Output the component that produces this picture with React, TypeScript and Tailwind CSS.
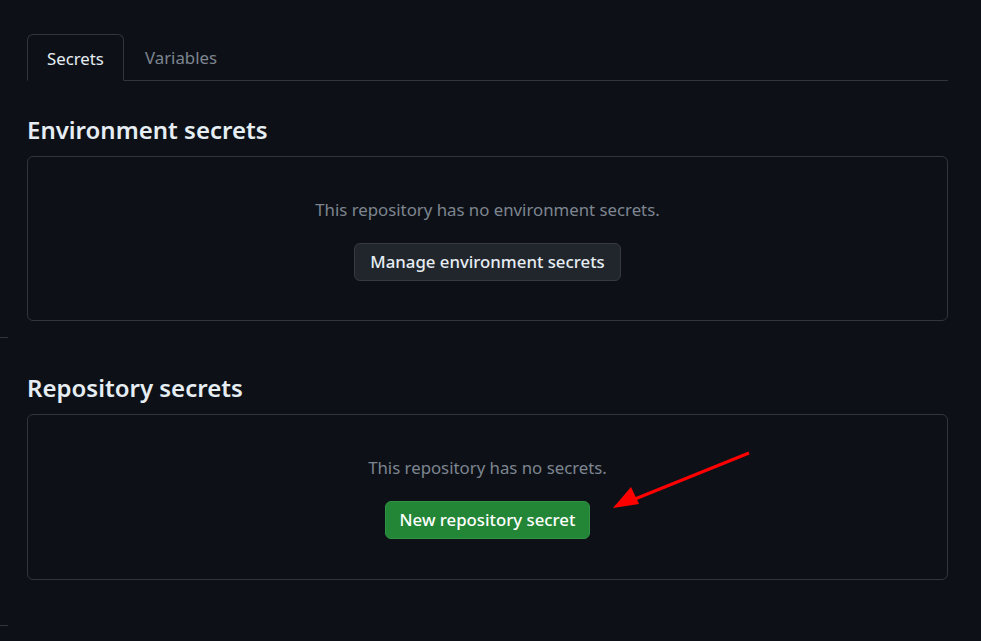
import React from "react";

export default function App() {
  const font = { fontFamily: '"Noto Sans", "Open Sans", sans-serif' };
  return (
    <div
      className="relative w-[981px] h-[641px] overflow-hidden bg-[#0d1117] pl-[27px] pr-[33px] pt-[34px]"
      style={font}
    >
      <div className="absolute left-0 top-[337px] w-[8px] h-px bg-[#30363d]" />
      <div className="absolute left-0 top-[625px] w-[8px] h-px bg-[#30363d]" />

      {/* Tabs */}
      <div className="flex border-b border-[#30363d] h-[47px]">
        <div className="w-[97px] h-[47px] -mb-px border border-[#30363d] border-b-[#0d1117] rounded-t-[6px] bg-[#0d1117] flex items-center pl-[19px] pt-[2px] text-[16.8px] text-[#e6edf3]">
          Secrets
        </div>
        <div className="flex items-center pl-[21px] pt-[2px] text-[16.8px] text-[#7d8590]">Variables</div>
      </div>

      <h2 className="mt-[31px] text-[24px] leading-[36px] font-semibold text-[#e6edf3]">
        Environment secrets
      </h2>
      <div className="mt-[8px] h-[165px] border border-[#30363d] rounded-[6px] flex flex-col items-center pt-[41px]">
        <p className="text-[16.8px] leading-[24px] text-[#7d8590]">
          This repository has no environment secrets.
        </p>
        <button className="mt-[21px] h-[38px] px-[15px] rounded-[6px] border border-[#363b42] bg-[#21262d] text-[16.8px] font-medium text-[#e6edf3]">
          Manage environment secrets
        </button>
      </div>

      <h2 className="mt-[49px] text-[24px] leading-[36px] font-semibold text-[#e6edf3]">
        Repository secrets
      </h2>
      <div className="mt-[8px] h-[166px] border border-[#30363d] rounded-[6px] flex flex-col items-center pt-[41px]">
        <p className="text-[16.8px] leading-[24px] text-[#7d8590]">This repository has no secrets.</p>
        <button className="mt-[21px] h-[38px] px-[14px] rounded-[6px] border border-[#2f9142] bg-[#238636] text-[16.8px] font-medium text-white">
          New repository secret
        </button>
      </div>

      <svg className="absolute left-0 top-0 pointer-events-none" width="981" height="641">
        <line x1="749" y1="453" x2="635" y2="499" stroke="#ff0000" strokeWidth="3" />
        <polygon points="613,508 631,487 639,504" fill="#ff0000" />
      </svg>
    </div>
  );
}
